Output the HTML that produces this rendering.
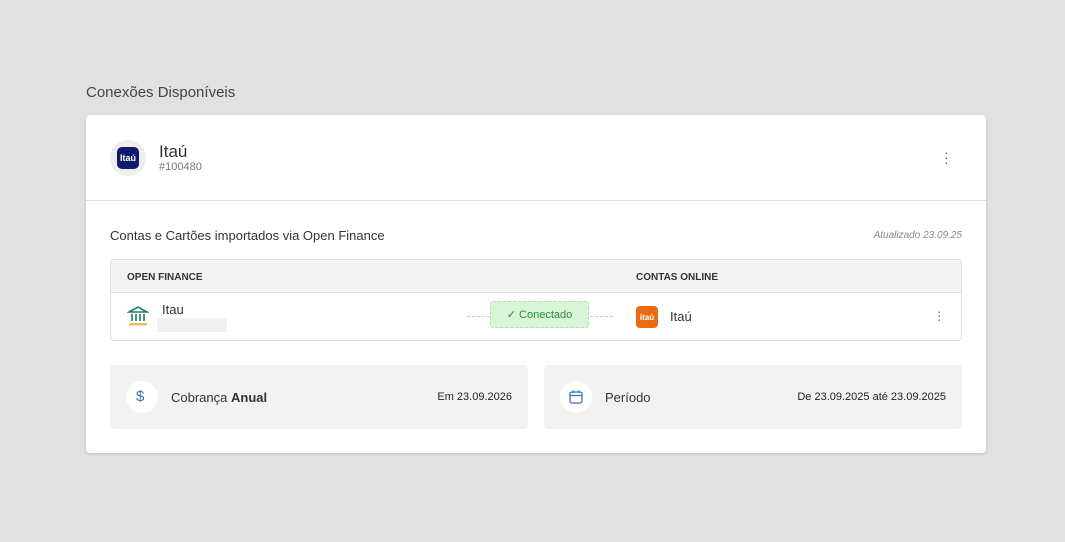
<!DOCTYPE html>
<html><head><style>
*{box-sizing:border-box;margin:0;padding:0}
body{width:1065px;height:542px;background:#e1e1e1;font-family:"Liberation Sans",sans-serif;color:#333;position:relative;overflow:hidden}
.abs{position:absolute}
.t{font-size:15px;color:#444;left:86px;top:84px}
.card{left:86px;top:115px;width:900px;height:338px;background:#fff;border-radius:4px;box-shadow:0 1px 3px rgba(0,0,0,.15)}
.sep{left:0;top:85px;width:900px;height:1px;background:#ddd}
.tbl{left:24px;top:144px;width:852px;height:82px;border:1px solid #ddd;border-radius:4px;overflow:hidden}
.th{left:0;top:0;width:100%;height:33px;background:#f2f2f2;border-bottom:1px solid #ddd}
.hd{font-size:10px;font-weight:bold;color:#333;top:11px}
.box{top:250px;height:64px;background:#f2f2f2;border-radius:4px}
.ic{left:16px;top:16px;width:32px;height:32px;border-radius:50%;background:#fff}
</style></head><body>
<div class="abs t">Conexões Disponíveis</div>
<div class="abs card">
 <div class="abs" style="left:24px;top:25px;width:36px;height:36px;border-radius:50%;background:#eee"></div>
 <div class="abs" style="left:31px;top:32px;width:22px;height:22px;border-radius:5px;background:#0f1a6b;color:#fff;font-size:9px;font-weight:bold;text-align:center;line-height:22px">Itaú</div>
 <div class="abs" style="left:73px;top:27px;font-size:17px;color:#333">Itaú</div>
 <div class="abs" style="left:73px;top:46px;font-size:11px;color:#777">#100480</div>
 <div class="abs" style="left:858px;top:35px;font-size:14px;color:#666;line-height:5px">·<br>·<br>·</div>
 <div class="abs sep"></div>
 <div class="abs" style="left:24px;top:113px;font-size:13px;color:#333">Contas e Cartões importados via Open Finance</div>
 <div class="abs" style="right:24px;top:115px;font-size:10px;color:#888;font-style:italic">Atualizado 23.09.25</div>
 <div class="abs tbl">
  <div class="abs th"></div>
  <div class="abs hd" style="left:16px;top:12px">OPEN FINANCE</div>
  <div class="abs hd" style="left:525px;top:12px">CONTAS ONLINE</div>
  <svg class="abs" style="left:16px;top:45px" width="22" height="22" viewBox="0 0 22 22"><path d="M2 7L11 2L20 7Z M3 7H19" stroke="#1a7f6a" stroke-width="1.6" fill="none"/><path d="M5 9V16M9 9V16M13 9V16M17 9V16" stroke="#1a7f6a" stroke-width="1.6"/><rect x="2" y="18" width="18" height="2.5" rx="1" fill="#e3c062"/></svg>
  <div class="abs" style="left:51px;top:42px;font-size:13px">Itau</div>
  <div class="abs" style="left:46px;top:58px;width:70px;height:14px;background:#f1f1f1"></div>
  <div class="abs" style="left:356px;top:56px;width:146px;border-top:1px dashed #ccc"></div>
  <div class="abs" style="left:379px;top:41px;width:99px;height:27px;background:#d9f5d8;border:1px dashed #b6dfb4;border-radius:3px;color:#2f8a35;font-size:11px;line-height:27px;text-align:center">✓ Conectado</div>
  <div class="abs" style="left:525px;top:46px;width:22px;height:22px;border-radius:4px;background:#ec6b12;color:#fff;font-size:8px;font-weight:bold;text-align:center;line-height:24px">itaú</div>
  <div class="abs" style="left:559px;top:49px;font-size:13px">Itaú</div>
  <div class="abs" style="left:826px;top:50px;font-size:13px;color:#666;line-height:4px">·<br>·<br>·</div>
 </div>
 <div class="abs box" style="left:24px;width:418px">
  <div class="abs ic"></div>
  <div class="abs" style="left:26px;top:23px;font-size:15px;color:#3a6fb0">$</div>
  <div class="abs" style="left:61px;top:25px;font-size:13px">Cobrança <b>Anual</b></div>
  <div class="abs" style="right:16px;top:26px;font-size:11px;color:#222">Em 23.09.2026</div>
 </div>
 <div class="abs box" style="left:458px;width:418px">
  <div class="abs ic"></div>
  <svg class="abs" style="left:24px;top:24px" width="16" height="16" viewBox="0 0 16 16"><rect x="2" y="3" width="12" height="11" rx="2" fill="none" stroke="#3a6fb0" stroke-width="1.3"/><path d="M2 6.5H14M5 1.5V4M11 1.5V4" stroke="#3a6fb0" stroke-width="1.3"/></svg>
  <div class="abs" style="left:61px;top:25px;font-size:13px">Período</div>
  <div class="abs" style="right:16px;top:26px;font-size:11px;color:#222">De 23.09.2025 até 23.09.2025</div>
 </div>
</div>
</body></html>
